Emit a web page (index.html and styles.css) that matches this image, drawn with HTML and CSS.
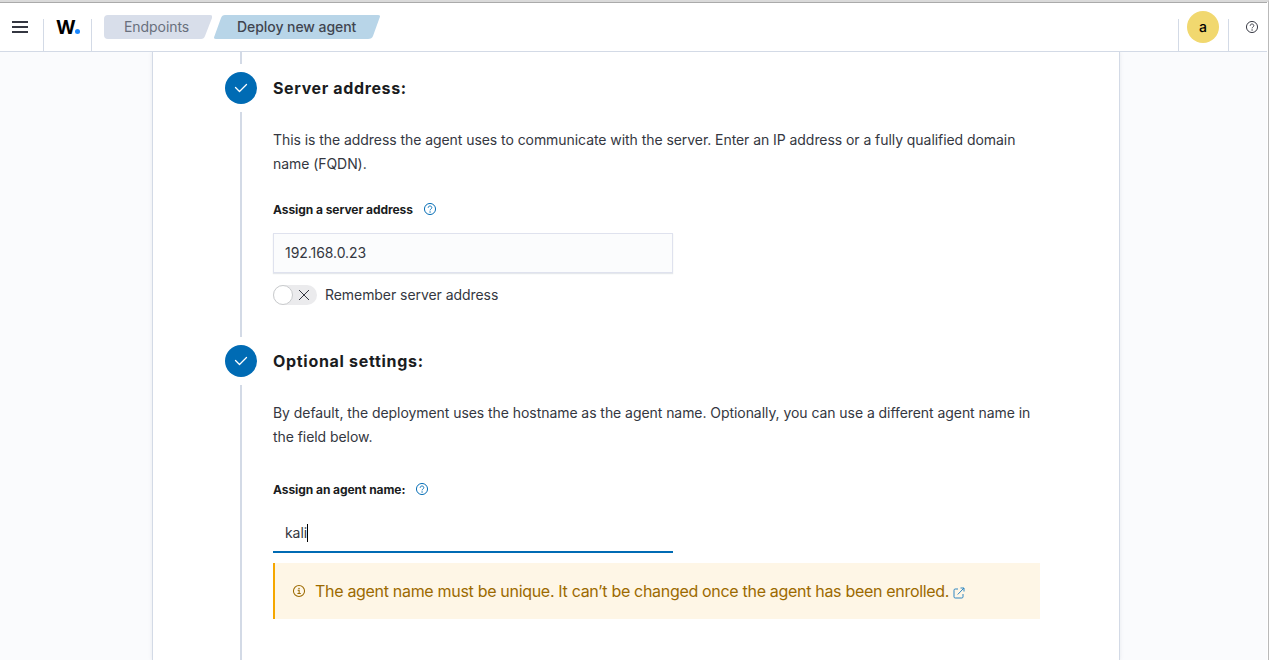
FILE: index.html
```html
<!DOCTYPE html>
<html lang="en">
<head>
<meta charset="utf-8">
<title>Deploy new agent</title>
<link rel="stylesheet" href="styles.css">
</head>
<body>
<svg class="sprite" aria-hidden="true">
  <symbol id="help" viewBox="0 0 16 16">
    <circle cx="8" cy="8" r="7.400" fill="none" stroke="currentColor" stroke-width="1.300"/>
    <path d="M5.600 6.400C5.600 4.800 6.700 4 8 4s2.400.8 2.400 2.200c0 1.800-2.300 1.800-2.300 3.600" fill="none" stroke="currentColor" stroke-width="1.200"/>
    <circle cx="8.100" cy="12" r=".9" fill="currentColor"/>
  </symbol>
  <symbol id="check" viewBox="0 0 16 16">
    <path d="M2.500 7.500l4 4 7-7" fill="none" stroke="currentColor" stroke-width="1.300" stroke-linecap="round" stroke-linejoin="round"/>
  </symbol>
</svg>
<div class="window">
  <header class="header">
    <button class="menu" aria-label="Menu"><i></i><i></i><i></i></button>
    <a class="logo">W<span class="dot"></span></a>
    <nav class="crumbs">
      <a class="crumb crumb-first">Endpoints</a>
      <span class="crumb crumb-last">Deploy new agent</span>
    </nav>
    <div class="account"><span class="avatar">a</span></div>
    <button class="help-btn" aria-label="Help"><svg class="icon12"><use href="#help"/></svg></button>
  </header>
  <main class="page">
    <div class="panel">
      <div class="tail"></div>
      <section class="step">
        <div class="rail"><span class="bullet"><svg class="tick"><use href="#check"/></svg></span><span class="line"></span></div>
        <div class="content">
          <h2 class="title">Server address:</h2>
          <p class="text">This is the address the agent uses to communicate with the server. Enter an IP address or a fully qualified domain name (FQDN).</p>
          <div class="label"><span>Assign a server address</span><svg class="icon12"><use href="#help"/></svg></div>
          <div class="field">192.168.0.23</div>
          <div class="switch"><span class="track"><span class="thumb"></span><svg class="cross" viewBox="0 0 12 12"><path d="M1 1l10 10M11 1L1 11" stroke="currentColor" stroke-width="1"/></svg></span><span class="switch-label">Remember server address</span></div>
        </div>
      </section>
      <section class="step step-last">
        <div class="rail"><span class="bullet"><svg class="tick"><use href="#check"/></svg></span><span class="line"></span></div>
        <div class="content">
          <h2 class="title title-wide">Optional settings:</h2>
          <p class="text">By default, the deployment uses the hostname as the agent name. Optionally, you can use a different agent name in the field below.</p>
          <div class="label label-name"><span>Assign an agent name:</span><svg class="icon12"><use href="#help"/></svg></div>
          <div class="field field-active">kali<span class="caret"></span></div>
          <div class="callout">
            <svg class="info" viewBox="0 0 16 16"><circle cx="8" cy="8" r="7.400" fill="none" stroke="currentColor" stroke-width="1.400"/><path d="M6.200 7h2v4.400M5.900 11.400h4.500" fill="none" stroke="currentColor" stroke-width="1.400"/><circle cx="8" cy="4.500" r="1" fill="currentColor"/></svg>
            <span class="callout-text">The agent name must be unique. It can’t be changed once the agent has been enrolled.</span>
            <svg class="external" viewBox="0 0 12 12"><path d="M5 2H2.200Q1 2 1 3.200v6.600Q1 11 2.200 11h6.600q1.200 0 1.200-1.200V7M7.500 1h3.500v3.500M11 1L4.700 7.500" fill="none" stroke="currentColor" stroke-width="1"/></svg>
          </div>
        </div>
      </section>
    </div>
  </main>
</div>
</body>
</html>
```
FILE: styles.css
```css
* { box-sizing: border-box; }
body {
  margin: 0;
  height: 660px;
  overflow: hidden;
  background: #fff;
  color: #343741;
  font: 14px/24px Inter, "Liberation Sans", sans-serif;
  letter-spacing: -.06px;
}
button { border: 0; padding: 0; background: none; color: inherit; }
.sprite { position: absolute; width: 0; height: 0; }
.window {
  height: 660px;
  display: flex;
  flex-direction: column;
  border-top: 2px solid #dadada;
  border-right: 1px solid #b9b9b9;
  padding-right: 1px;
}
.header {
  height: 50px;
  flex: none;
  display: flex;
  align-items: flex-end;
  border-top: 1px solid #aaa;
  border-bottom: 1px solid #d3dae6;
}
.menu {
  width: 44px;
  height: 32px;
  display: flex;
  flex-direction: column;
  gap: 3px;
  padding: 2px 0 0 12px;
  border-right: 1px solid #d3dae6;
}
.menu i { width: 16px; height: 2px; background: #343741; }
.logo {
  width: 48px;
  height: 32px;
  display: flex;
  padding-left: 12px;
  border-right: 1px solid #d3dae6;
  color: #000;
  font-size: 19px;
  font-weight: 700;
  line-height: 17px;
}
.dot { width: 5px; height: 5px; margin: 10px 0 0 -1px; border-radius: 50%; background: #1a87ff; }
.crumbs { display: flex; gap: 2px; margin-left: 12px; padding-bottom: 12px; }
.crumb { height: 24px; white-space: nowrap; }
.crumb-first {
  width: 108px;
  padding-left: 20px;
  background: #d8deea;
  color: #69707d;
  clip-path: path("M4 0H106Q109 0 108 3L101 21Q100 24 97 24H4Q0 24 0 20V4Q0 0 4 0Z");
}
.crumb-last {
  width: 166px;
  padding-left: 23px;
  background: #b8d5e8;
  color: #404550;
  font-weight: 500;
  clip-path: path("M11 0H164Q167 0 165.500 3L159 21Q158 24 154 24H2Q-1 24 .5 21L7 3Q8 0 11 0Z");
}
.account {
  width: 51px;
  height: 32px;
  margin-left: auto;
  border: solid #d3dae6;
  border-width: 0 1px;
  padding-left: 8px;
}
.avatar {
  display: block;
  width: 32px;
  height: 32px;
  margin-top: -8px;
  border-radius: 50%;
  background: #f1d86f;
  color: #000;
  font-size: 14px;
  font-weight: 500;
  line-height: 32px;
  text-align: center;
}
.help-btn { width: 38px; height: 32px; padding: 2px 0 0 17px; display: flex; }
.icon12 { width: 12px; height: 12px; overflow: visible; }
.page { flex: 1; min-height: 0; background: #fafbfd; padding: 0 147px 0 152px; }
.panel {
  height: 608px;
  padding: 0 79px 0 72px;
  border: solid #d3dae6;
  border-width: 0 1px;
  background: #fff;
  box-shadow: 0 0 4px rgba(152, 162, 179, .2);
  clip-path: inset(0 -5px);
}
.tail { width: 2px; height: 12px; margin: 0 0 8px 15px; background: #d3dae6; }
.step { display: flex; gap: 16px; height: 273px; }
.step-last { height: 330px; }
.rail { width: 32px; display: flex; flex-direction: column; align-items: center; gap: 8px; padding-bottom: 8px; }
.bullet {
  width: 32px;
  height: 32px;
  flex: none;
  display: flex;
  align-items: center;
  justify-content: center;
  border-radius: 50%;
  background: #006bb4;
  color: #fff;
}
.tick { width: 16px; height: 16px; }
.line { width: 2px; flex: 1; background: #d3dae6; }
.content { width: 767px; }
.title { margin: 0; font-size: 16px; line-height: 32px; font-weight: 700; color: #1a1c21; letter-spacing: .63px; }
.title-wide { letter-spacing: .7px; }
.text { margin: 24px 0 0; }
.label {
  display: flex;
  align-items: center;
  gap: 11px;
  margin-top: 25px;
  height: 18px;
  color: #1a1c21;
  font-size: 12px;
  font-weight: 700;
}
.label .icon12 { margin-top: -2px; color: #006bb4; }
.label-name { margin-top: 32px; }
.field {
  width: 400px;
  height: 40px;
  margin-top: 14px;
  padding: 0 11px;
  border: 1px solid #dfe2ee;
  background: #fbfcfd;
  box-shadow: 0 1px 1px rgba(152, 162, 179, .25);
  line-height: 38px;
}
.field-active {
  display: flex;
  align-items: center;
  border: solid #006bb4;
  border-width: 0 0 2px;
  padding: 2px 12px 0;
  background: #fff;
  box-shadow: none;
}
.caret { width: 1px; height: 18px; background: #000; }
.switch { display: flex; gap: 8px; margin-top: 12px; height: 20px; line-height: 20px; }
.track {
  width: 44px;
  height: 20px;
  display: flex;
  align-items: center;
  gap: 5px;
  border-radius: 10px;
  background: #ebebed;
}
.thumb { width: 20px; height: 20px; border: 1px solid #c9cbcd; border-radius: 50%; background: #fff; }
.cross { width: 12px; height: 12px; }
.callout {
  display: flex;
  align-items: center;
  height: 56px;
  margin-top: 10px;
  padding-left: 18px;
  border-left: 2px solid #f5a700;
  background: #fef6e6;
  color: #9c6a00;
  font-size: 16px;
  letter-spacing: -.31px;
}
.info { width: 12px; height: 12px; overflow: visible; margin-right: 10px; }
.callout-text { white-space: nowrap; }
.external { width: 12px; height: 12px; margin: 3px 0 0 4px; color: #2f86c1; }
```
